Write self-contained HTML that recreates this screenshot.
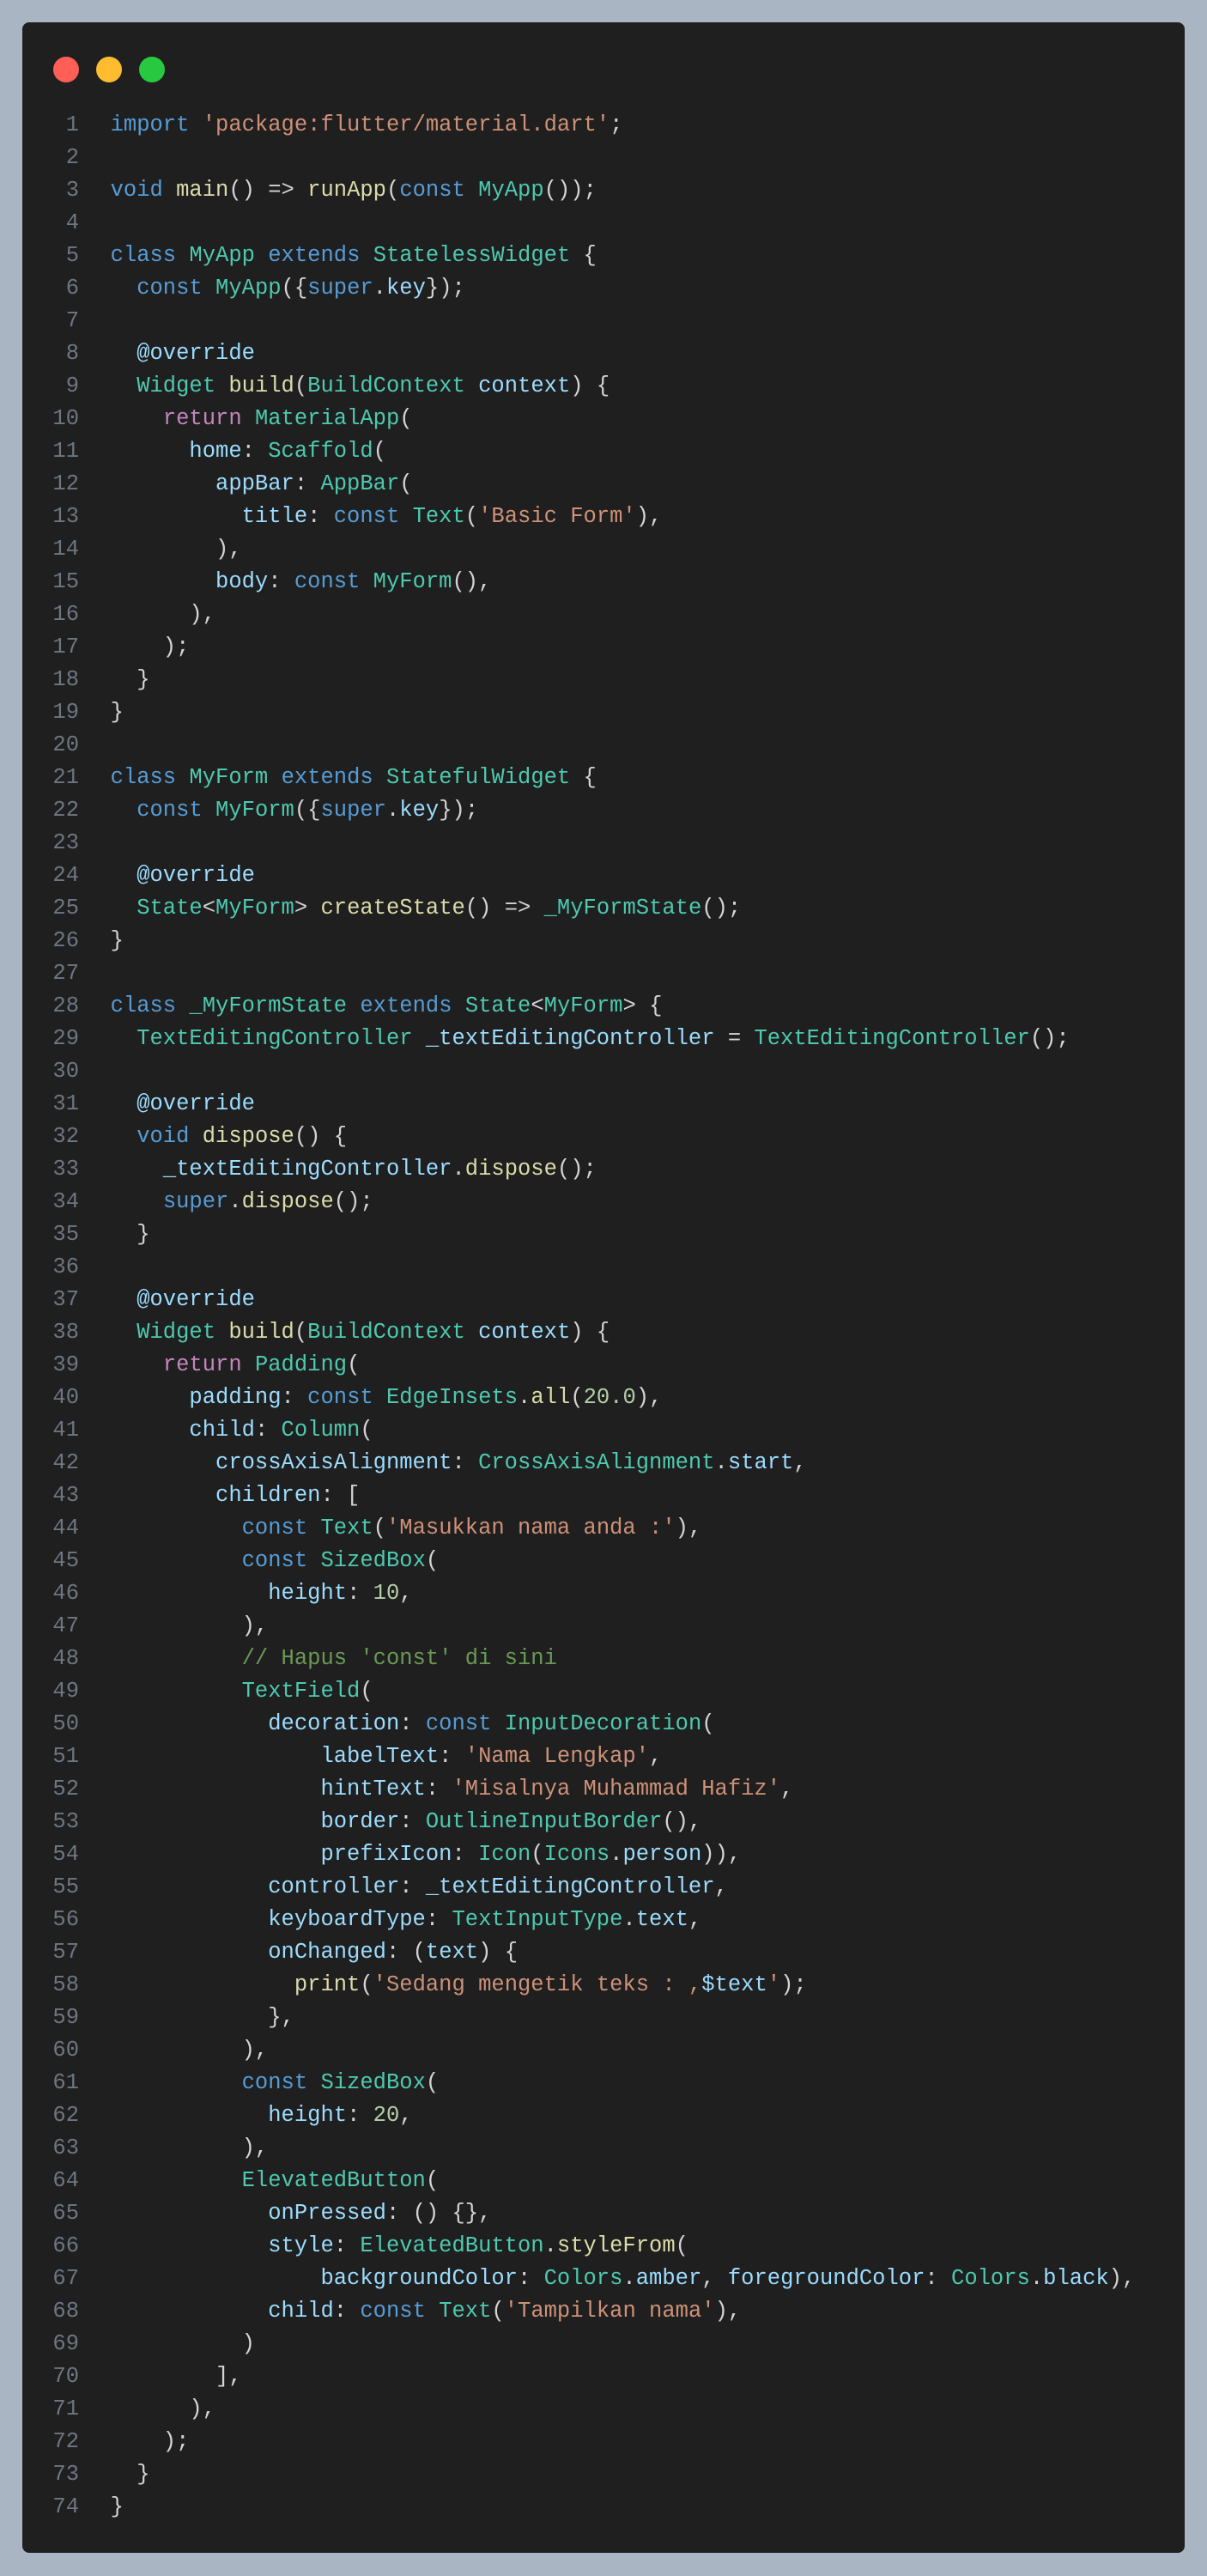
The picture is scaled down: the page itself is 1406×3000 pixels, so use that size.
<!DOCTYPE html>
<html><head><meta charset="utf-8"><style>
html,body{margin:0;padding:0;background:#a9b5c2;width:1406px;height:3000px;overflow:hidden}
.card{position:absolute;left:26px;top:26px;width:1354px;height:2947px;background:#1f1f1f;border-radius:8px}
.dot{position:absolute;top:40px;width:30px;height:30px;border-radius:50%}
.ln{position:absolute;left:30px;top:101px;width:36px;text-align:right;margin:0;font:25.5px/38px "Liberation Mono",monospace;color:#6e7681;white-space:pre}
.code{position:absolute;left:102.6px;top:101px;margin:0;font:25.5px/38px "Liberation Mono",monospace;color:#d4d4d4;white-space:pre}
.k{color:#569cd6}.s{color:#ce9178}.f{color:#dcdcaa}.c{color:#4ec9b0}.r{color:#c586c0}.p{color:#9cdcfe}.n{color:#b5cea8}.m{color:#6a9955}
</style></head><body>
<div class="card">
<div class="dot" style="left:36px;background:#ff5f57"></div>
<div class="dot" style="left:86px;background:#febc2e"></div>
<div class="dot" style="left:136px;background:#28c840"></div>
<pre class="ln">1
2
3
4
5
6
7
8
9
10
11
12
13
14
15
16
17
18
19
20
21
22
23
24
25
26
27
28
29
30
31
32
33
34
35
36
37
38
39
40
41
42
43
44
45
46
47
48
49
50
51
52
53
54
55
56
57
58
59
60
61
62
63
64
65
66
67
68
69
70
71
72
73
74</pre>
<pre class="code"><span class="k">import</span> <span class="s">'package:flutter/material.dart'</span>;

<span class="k">void</span> <span class="f">main</span>() =&gt; <span class="f">runApp</span>(<span class="k">const</span> <span class="c">MyApp</span>());

<span class="k">class</span> <span class="c">MyApp</span> <span class="k">extends</span> <span class="c">StatelessWidget</span> {
  <span class="k">const</span> <span class="c">MyApp</span>({<span class="k">super</span>.<span class="p">key</span>});

  <span class="p">@override</span>
  <span class="c">Widget</span> <span class="f">build</span>(<span class="c">BuildContext</span> <span class="p">context</span>) {
    <span class="r">return</span> <span class="c">MaterialApp</span>(
      <span class="p">home</span>: <span class="c">Scaffold</span>(
        <span class="p">appBar</span>: <span class="c">AppBar</span>(
          <span class="p">title</span>: <span class="k">const</span> <span class="c">Text</span>(<span class="s">'Basic Form'</span>),
        ),
        <span class="p">body</span>: <span class="k">const</span> <span class="c">MyForm</span>(),
      ),
    );
  }
}

<span class="k">class</span> <span class="c">MyForm</span> <span class="k">extends</span> <span class="c">StatefulWidget</span> {
  <span class="k">const</span> <span class="c">MyForm</span>({<span class="k">super</span>.<span class="p">key</span>});

  <span class="p">@override</span>
  <span class="c">State</span>&lt;<span class="c">MyForm</span>&gt; <span class="f">createState</span>() =&gt; <span class="c">_MyFormState</span>();
}

<span class="k">class</span> <span class="c">_MyFormState</span> <span class="k">extends</span> <span class="c">State</span>&lt;<span class="c">MyForm</span>&gt; {
  <span class="c">TextEditingController</span> <span class="p">_textEditingController</span> = <span class="c">TextEditingController</span>();

  <span class="p">@override</span>
  <span class="k">void</span> <span class="f">dispose</span>() {
    <span class="p">_textEditingController</span>.<span class="f">dispose</span>();
    <span class="k">super</span>.<span class="f">dispose</span>();
  }

  <span class="p">@override</span>
  <span class="c">Widget</span> <span class="f">build</span>(<span class="c">BuildContext</span> <span class="p">context</span>) {
    <span class="r">return</span> <span class="c">Padding</span>(
      <span class="p">padding</span>: <span class="k">const</span> <span class="c">EdgeInsets</span>.<span class="f">all</span>(<span class="n">20.0</span>),
      <span class="p">child</span>: <span class="c">Column</span>(
        <span class="p">crossAxisAlignment</span>: <span class="c">CrossAxisAlignment</span>.<span class="p">start</span>,
        <span class="p">children</span>: [
          <span class="k">const</span> <span class="c">Text</span>(<span class="s">'Masukkan nama anda :'</span>),
          <span class="k">const</span> <span class="c">SizedBox</span>(
            <span class="p">height</span>: <span class="n">10</span>,
          ),
          <span class="m">// Hapus 'const' di sini</span>
          <span class="c">TextField</span>(
            <span class="p">decoration</span>: <span class="k">const</span> <span class="c">InputDecoration</span>(
                <span class="p">labelText</span>: <span class="s">'Nama Lengkap'</span>,
                <span class="p">hintText</span>: <span class="s">'Misalnya Muhammad Hafiz'</span>,
                <span class="p">border</span>: <span class="c">OutlineInputBorder</span>(),
                <span class="p">prefixIcon</span>: <span class="c">Icon</span>(<span class="c">Icons</span>.<span class="p">person</span>)),
            <span class="p">controller</span>: <span class="p">_textEditingController</span>,
            <span class="p">keyboardType</span>: <span class="c">TextInputType</span>.<span class="p">text</span>,
            <span class="p">onChanged</span>: (<span class="p">text</span>) {
              <span class="f">print</span>(<span class="s">'Sedang mengetik teks : ,</span><span class="p">$text</span><span class="s">'</span>);
            },
          ),
          <span class="k">const</span> <span class="c">SizedBox</span>(
            <span class="p">height</span>: <span class="n">20</span>,
          ),
          <span class="c">ElevatedButton</span>(
            <span class="p">onPressed</span>: () {},
            <span class="p">style</span>: <span class="c">ElevatedButton</span>.<span class="f">styleFrom</span>(
                <span class="p">backgroundColor</span>: <span class="c">Colors</span>.<span class="p">amber</span>, <span class="p">foregroundColor</span>: <span class="c">Colors</span>.<span class="p">black</span>),
            <span class="p">child</span>: <span class="k">const</span> <span class="c">Text</span>(<span class="s">'Tampilkan nama'</span>),
          )
        ],
      ),
    );
  }
}</pre>
</div>
</body></html>
